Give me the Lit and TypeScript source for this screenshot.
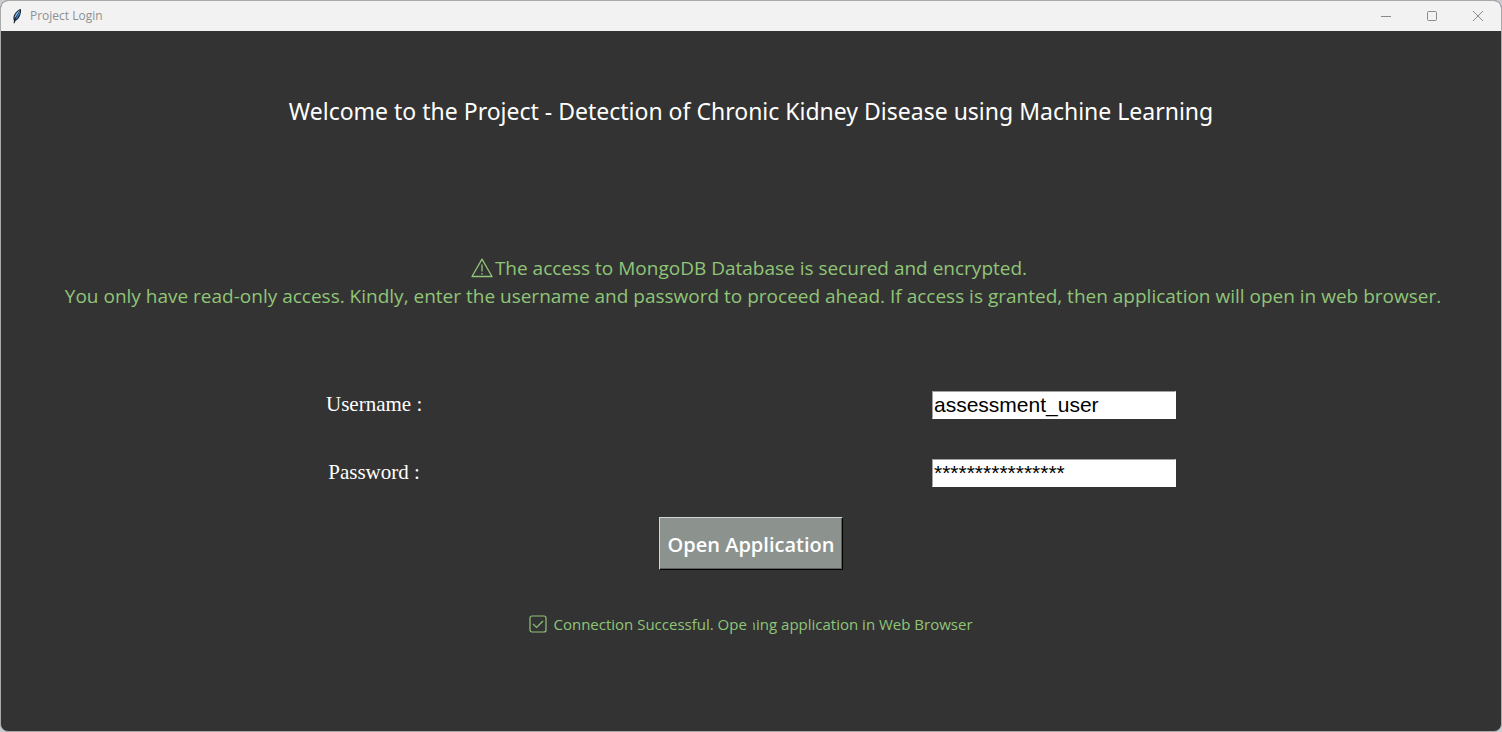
import { LitElement, html, css, svg } from "lit";
import { customElement, state } from "lit/decorators.js";

const feather = svg`
  <path d="M9.8 1 C6.8 1.6 3.6 5 2.6 8.6 C2.2 10.4 2.4 11.6 3 12.6 L2.6 15.2 L3.6 15.2 L4.4 12.9 C7 11.6 8.8 9 9.5 6.2 C10 4.2 10.3 2.6 9.8 1 Z" fill="#16202c"/>
  <path d="M9.2 1.9 C7 2.8 4.6 5.6 3.7 8.6 L3.5 10.8 L5.6 7.4 Z" fill="#8fc0ee"/>
  <path d="M9.3 2.6 L8.6 6.4 L6.2 10.2 L4.3 11.8 L6.2 7.6 Z" fill="#3f82cc"/>`;

@customElement("app-root")
export class AppRoot extends LitElement {
  @state() private username = "assessment_user";
  @state() private password = "*".repeat(16);

  static styles = css`
    :host {
      display: block;
      min-height: 100vh;
      background: #c9ccd0;
      font-family: "Segoe UI", "Open Sans", "Noto Sans", sans-serif;
    }
    * {
      box-sizing: border-box;
    }
    .window {
      display: flex;
      flex-direction: column;
      min-height: 100vh;
      border: 1px solid #a9a9a9;
      border-radius: 8px;
      overflow: hidden;
      background: #333333;
    }
    .titlebar {
      display: flex;
      align-items: center;
      height: 30px;
      padding-left: 10px;
      background: #f2f2f2;
      color: #8f8f8f;
    }
    .feather {
      width: 12px;
      height: 16px;
      margin-right: 7px;
    }
    .title {
      flex: 1;
      font-size: 12px;
      line-height: 16px;
    }
    .control {
      display: grid;
      place-items: center;
      width: 46px;
      height: 30px;
      padding: 0;
      border: 0;
      background: none;
      color: #8a8a8a;
    }
    .control svg {
      width: 12px;
      height: 12px;
      fill: none;
      stroke: currentColor;
    }
    .content {
      display: flex;
      flex-direction: column;
      align-items: center;
      padding: 64px 16px 0;
      text-align: center;
    }
    h1 {
      margin: 0;
      font-family: "Segoe UI", "Noto Sans", sans-serif;
      font-size: 23px;
      line-height: 32px;
      font-weight: 400;
      color: #ffffff;
    }
    .notice {
      margin: 127px 0 0;
      padding-left: 4px;
      font-size: 19px;
      line-height: 28px;
      color: #90c578;
    }
    .first {
      display: flex;
      justify-content: center;
      align-items: center;
      gap: 2px;
      padding-right: 8px;
    }
    .notice svg {
      width: 22px;
      height: 20px;
    }
    .notice svg,
    .status svg {
      fill: none;
      stroke: currentColor;
    }
    form {
      display: flex;
      flex-direction: column;
      align-items: center;
      width: 100%;
      max-width: 850px;
      margin-top: 81px;
    }
    .fields {
      display: grid;
      grid-template-columns: 96px 244px;
      justify-content: space-between;
      align-items: center;
      row-gap: 40px;
      width: 100%;
    }
    label {
      padding-bottom: 2px;
      font-family: "Liberation Serif", serif;
      font-size: 21px;
      line-height: 26px;
      color: #ffffff;
      white-space: nowrap;
    }
    input {
      width: 100%;
      height: 28px;
      padding: 0 1px;
      border: 1px solid #ffffff;
      border-top-color: #a0a0a0;
      border-left-color: #a0a0a0;
      border-radius: 0;
      outline: 0;
      background: #ffffff;
      color: #000000;
      font-family: "Liberation Sans", sans-serif;
      font-size: 21px;
    }
    .open {
      height: 53px;
      margin-top: 30px;
      padding: 2px 8px 0;
      border: 1px solid;
      border-color: #d0d6d2 #000000 #000000 #d0d6d2;
      box-shadow: inset -1px -1px #5c605e;
      background: #8c938e;
      color: #ffffff;
      font-family: inherit;
      font-size: 20px;
      line-height: 28px;
      font-weight: 600;
    }
    .status {
      display: flex;
      align-items: center;
      gap: 6px;
      margin: 42px 0 0;
      font-size: 15px;
      line-height: 24px;
      color: #90c578;
    }
    .status svg {
      width: 18px;
      height: 18px;
    }
    .clipped {
      background: linear-gradient(90deg, transparent 70%, #90c578 70%);
      background-clip: text;
      -webkit-background-clip: text;
      color: transparent;
    }
  `;

  render() {
    return html`
      <main class="window">
        <header class="titlebar">
          <svg class="feather" viewBox="0 0 12 16" aria-hidden="true">${feather}</svg>
          <span class="title">Project Login</span>
          <button class="control" type="button" aria-label="Minimize">
            <svg viewBox="0 0 12 12"><path d="M1 6.5H11" /></svg>
          </button>
          <button class="control" type="button" aria-label="Maximize">
            <svg viewBox="0 0 12 12"><rect x="1.5" y="1.5" width="9" height="9" rx="1" /></svg>
          </button>
          <button class="control" type="button" aria-label="Close">
            <svg viewBox="0 0 12 12"><path d="M1 1L11 11M11 1L1 11" /></svg>
          </button>
        </header>
        <section class="content">
          <h1>Welcome to the Project - Detection of Chronic Kidney Disease using Machine Learning</h1>
          <p class="notice">
            <span class="first">
              <svg viewBox="0 0 22 20" stroke-width="1.3" aria-hidden="true">
                <path d="M11 1.2L21 18.5H1Z" stroke-linejoin="round" />
                <path d="M11 6.5V13.5M11 15V16.6" />
              </svg>
              <span>The access to MongoDB Database is secured and encrypted.</span>
            </span>
            <span>You only have read-only access. Kindly, enter the username and password to proceed ahead. If access is granted, then application will open in web browser.</span>
          </p>
          <form @submit=${(e: Event) => e.preventDefault()}>
            <div class="fields">
              <label for="username">Username :</label>
              <input id="username" type="text" autocomplete="off" spellcheck="false" .value=${this.username}
                @input=${(e: Event) => (this.username = (e.target as HTMLInputElement).value)} />
              <label for="password">Password :</label>
              <input id="password" type="text" autocomplete="off" spellcheck="false" .value=${this.password}
                @input=${(e: Event) => (this.password = (e.target as HTMLInputElement).value)} />
            </div>
            <button class="open" type="submit">Open Application</button>
          </form>
          <p class="status" role="status">
            <svg viewBox="0 0 18 18" stroke-width="1.2" aria-hidden="true">
              <rect x="1" y="1" width="16" height="16" rx="2" />
              <path d="M4 8.8L7.6 12.4L14 6" />
            </svg>
            <span>Connection Successful. Ope<span class="clipped">n</span>ing application in Web Browser</span>
          </p>
        </section>
      </main>
    `;
  }
}
